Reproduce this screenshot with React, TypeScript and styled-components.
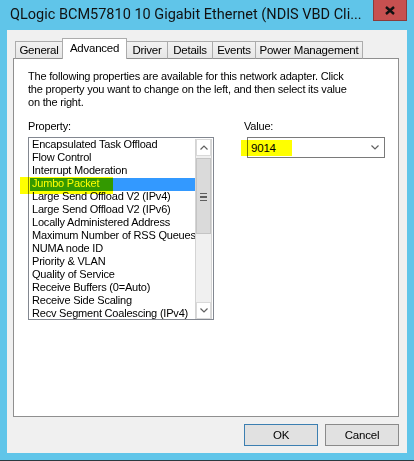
import styled, { createGlobalStyle } from "styled-components";

const GlobalStyle = createGlobalStyle`
  html, body { margin: 0; padding: 0; }
  body { font-family: "Liberation Sans", Arial, sans-serif; }
`;

const Frame = styled.div`
  width: 414px;
  height: 461px;
  box-sizing: border-box;
  background: #60c5e9;
  border-bottom: 1px solid #2b3a40;
  display: flex;
  flex-direction: column;
`;

const TitleBar = styled.div`
  height: 30px;
  display: flex;
  align-items: flex-start;
  padding: 0 7px 0 10px;
  box-sizing: border-box;
`;

const Title = styled.div`
  flex: 1;
  font-family: Roboto, "Noto Sans", sans-serif;
  font-size: 14.5px;
  line-height: 30px;
  color: #111;
  white-space: nowrap;
  overflow: hidden;
`;

const CloseButton = styled.div`
  width: 34px;
  height: 21px;
  flex: none;
  background: #c75050;
  border: 1px solid #8c3a3a;
  border-top: none;
  box-sizing: border-box;
  display: flex;
  align-items: center;
  justify-content: center;
`;

const Client = styled.div`
  margin: 0 7px;
  height: 423px;
  background: #f0f0f0;
  display: flex;
  flex-direction: column;
  padding: 8px 8px 0 6px;
  box-sizing: border-box;
  font-size: 11px;
  letter-spacing: -0.2px;
  color: #000;
`;

const TabStrip = styled.div`
  height: 21px;
  margin-bottom: -1px;
  padding-left: 2px;
  display: flex;
  align-items: flex-end;
  position: relative;
  z-index: 1;
`;

const Tab = styled.div<{ $w: number; $active?: boolean }>`
  width: ${(p) => p.$w}px;
  height: ${(p) => (p.$active ? 21 : 18)}px;
  margin-left: -1px;
  box-sizing: border-box;
  border: 1px solid #acacac;
  border-bottom: ${(p) => (p.$active ? "none" : "1px solid #8f8f8f")};
  background: ${(p) => (p.$active ? "#fff" : "linear-gradient(#f2f2f2, #e6e6e6)")};
  position: relative;
  z-index: ${(p) => (p.$active ? 2 : 1)};
  display: flex;
  justify-content: center;
  padding-top: ${(p) => (p.$active ? 2 : 1)}px;
  font-size: 11.5px;
  letter-spacing: -0.25px;
  line-height: 14px;
  white-space: nowrap;
  &:first-child { margin-left: 0; }
`;

const Panel = styled.div`
  height: 359px;
  box-sizing: border-box;
  border: 1px solid #8f8f8f;
  background: #fff;
  padding: 11px 14px;
`;

const Description = styled.div`
  line-height: 13px;
  white-space: nowrap;
`;

const Columns = styled.div`
  margin-top: 11px;
  display: grid;
  grid-template-columns: 186px 1fr;
  column-gap: 30px;
`;

const Label = styled.div`
  line-height: 13px;
  margin-bottom: 4px;
`;

const ListBox = styled.div`
  width: 186px;
  height: 183px;
  box-sizing: border-box;
  border: 1px solid #828790;
  padding: 1px 1px 0;
  display: flex;
  position: relative;
`;

const Items = styled.div`
  flex: 1;
  overflow: hidden;
`;

const Item = styled.div<{ $selected?: boolean }>`
  height: 13px;
  line-height: 11px;
  padding-left: 2px;
  white-space: nowrap;
  background: ${(p) => (p.$selected ? "#3399ff" : "transparent")};
  color: ${(p) => (p.$selected ? "#fff" : "#000")};
`;

const ScrollBar = styled.div`
  width: 17px;
  flex: none;
  box-sizing: border-box;
  background: #f0f0f0;
  border-left: 1px solid #d4d4d4;
  border-right: 1px solid #d4d4d4;
  display: flex;
  flex-direction: column;
`;

const ArrowButton = styled.div<{ $bottom?: boolean }>`
  height: 17px;
  box-sizing: border-box;
  background: #fff;
  border: 1px solid #d9d9d9;
  margin-top: ${(p) => (p.$bottom ? "auto" : "0")};
  display: flex;
  align-items: center;
  justify-content: center;
`;

const Thumb = styled.div`
  height: 76px;
  margin-top: 2px;
  box-sizing: border-box;
  background: #dadada;
  border: 1px solid #c4c4c4;
  display: flex;
  flex-direction: column;
  align-items: center;
  justify-content: center;
  gap: 2px;
  padding-top: 2px;
`;

const Grip = styled.div`
  width: 7px;
  height: 1.5px;
  background: #5f5f5f;
`;

const ValueColumn = styled.div`
  display: flex;
  flex-direction: column;
  align-items: flex-start;
`;

const Combo = styled.div`
  margin-left: 3px;
  width: 138px;
  height: 21px;
  box-sizing: border-box;
  border: 1px solid #7a7a7a;
  background: #fff;
  display: flex;
  align-items: center;
  justify-content: space-between;
  padding: 0 5px 0 3px;
  position: relative;
  font-size: 11.5px;
`;

const Highlight = styled.div<{ $x: number; $y: number; $w: number; $h: number }>`
  position: absolute;
  left: ${(p) => p.$x}px;
  top: ${(p) => p.$y}px;
  width: ${(p) => p.$w}px;
  height: ${(p) => p.$h}px;
  background: #ffff00;
  mix-blend-mode: multiply;
  pointer-events: none;
`;

const ButtonRow = styled.div`
  margin-top: 7px;
  display: flex;
  justify-content: flex-end;
  gap: 7px;
`;

const Button = styled.div<{ $default?: boolean }>`
  width: 74px;
  height: 22px;
  box-sizing: border-box;
  border: 1px solid ${(p) => (p.$default ? "#3c7fb1" : "#8a8a8a")};
  background: #e1e1e1;
  display: flex;
  align-items: center;
  justify-content: center;
  font-size: 11.5px;
`;

const Chevron = ({ up }: { up?: boolean }) => (
  <svg width="8" height="5" viewBox="0 0 8 5">
    <polyline
      points={up ? "0.5,4.5 4,1 7.5,4.5" : "0.5,0.5 4,4 7.5,0.5"}
      fill="none"
      stroke="#606060"
      strokeWidth="1.2"
    />
  </svg>
);

const tabs = [
  { title: "General", w: 48 },
  { title: "Advanced", w: 65, active: true },
  { title: "Driver", w: 42 },
  { title: "Details", w: 46 },
  { title: "Events", w: 44 },
  { title: "Power Management", w: 108 },
];

const properties = [
  "Encapsulated Task Offload",
  "Flow Control",
  "Interrupt Moderation",
  "Jumbo Packet",
  "Large Send Offload V2 (IPv4)",
  "Large Send Offload V2 (IPv6)",
  "Locally Administered Address",
  "Maximum Number of RSS Queues",
  "NUMA node ID",
  "Priority & VLAN",
  "Quality of Service",
  "Receive Buffers (0=Auto)",
  "Receive Side Scaling",
  "Recv Segment Coalescing (IPv4)",
];

export default function App() {
  return (
    <>
      <GlobalStyle />
      <Frame>
        <TitleBar>
          <Title>QLogic BCM57810 10 Gigabit Ethernet (NDIS VBD Cli...</Title>
          <CloseButton>
            <svg width="10" height="9" viewBox="0 0 10 9">
              <path d="M1 1 L9 8 M9 1 L1 8" stroke="#111" strokeWidth="2.4" />
            </svg>
          </CloseButton>
        </TitleBar>

        <Client>
          <TabStrip>
            {tabs.map((t) => (
              <Tab key={t.title} $w={t.w} $active={t.active}>
                {t.title}
              </Tab>
            ))}
          </TabStrip>

          <Panel>
            <Description>
              The following properties are available for this network adapter. Click
              <br />
              the property you want to change on the left, and then select its value
              <br />
              on the right.
            </Description>

            <Columns>
              <div>
                <Label>Property:</Label>
                <ListBox>
                  <Items>
                    {properties.map((p) => (
                      <Item key={p} $selected={p === "Jumbo Packet"}>
                        {p}
                      </Item>
                    ))}
                  </Items>
                  <ScrollBar>
                    <ArrowButton>
                      <Chevron up />
                    </ArrowButton>
                    <Thumb>
                      <Grip />
                      <Grip />
                      <Grip />
                    </Thumb>
                    <ArrowButton $bottom>
                      <Chevron />
                    </ArrowButton>
                  </ScrollBar>
                  <Highlight $x={-9} $y={39} $w={93} $h={17} />
                </ListBox>
              </div>

              <ValueColumn>
                <Label>Value:</Label>
                <Combo>
                  <span>9014</span>
                  <Chevron />
                  <Highlight $x={-7} $y={2} $w={51} $h={16} />
                </Combo>
              </ValueColumn>
            </Columns>
          </Panel>

          <ButtonRow>
            <Button $default>OK</Button>
            <Button>Cancel</Button>
          </ButtonRow>
        </Client>
      </Frame>
    </>
  );
}
